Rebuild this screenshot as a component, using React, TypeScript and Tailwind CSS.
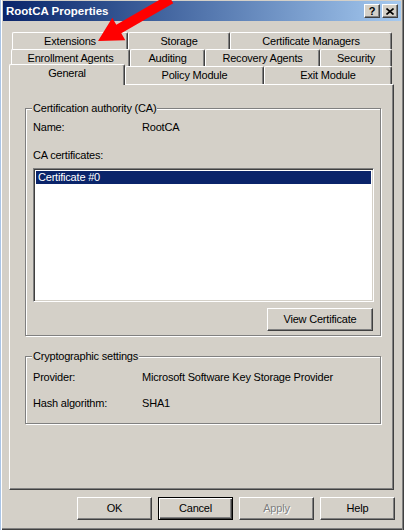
import React from 'react';

const tabBase =
  'flex items-center justify-center bg-[#d4d0c8] border-l border-t border-white border-r border-r-[#404040] shadow-[inset_-1px_0_0_#808080] rounded-t-[2px]';

const btnBase =
  'flex items-center justify-center h-[23px] bg-[#d4d0c8] border border-t-white border-l-white border-r-[#404040] border-b-[#404040] shadow-[inset_-1px_-1px_0_#808080]';

const Tab = ({ label, w, selected }: { label: string; w: string; selected?: boolean }) => (
  <div
    className={`${tabBase} ${w} ${
      selected ? 'h-[21px] -mb-px relative z-10 pb-[3px]' : 'h-full'
    }`}
  >
    {label}
  </div>
);

const GroupBox = ({ title, className, children }: { title: string; className: string; children: React.ReactNode }) => (
  <div
    className={`relative border border-[#808080] shadow-[inset_1px_1px_0_#fff,1px_1px_0_#fff] ${className}`}
  >
    <span className="absolute -top-[7px] left-[6px] bg-[#d4d0c8] px-px leading-[13px]">{title}</span>
    {children}
  </div>
);

const App: React.FC = () => {
  return (
    <div className="relative w-[404px] h-[530px] overflow-hidden bg-[#d4d0c8] text-black text-[11px] leading-[13px] tracking-[-0.2px] font-['Liberation_Sans',Arial,sans-serif] shadow-[inset_1px_0_0_#a9c4e6,inset_2px_0_0_#ffffff,inset_-1px_0_0_#404040,inset_-2px_0_0_#808080,inset_0_-1px_0_#404040,inset_0_-2px_0_#808080]">
      {/* Title bar */}
      <div className="mx-[3px] mt-px h-[20px] flex items-center justify-between bg-gradient-to-r from-[#0a246a] to-[#a6caf0] pl-[3px] pr-[3px]">
        <span className="text-white font-bold text-[11.5px] tracking-normal">RootCA Properties</span>
        <div className="flex gap-[2px]">
          <div className={`${btnBase} w-[16px] !h-[14px] font-bold text-[11px] leading-none tracking-normal`}>?</div>
          <div className={`${btnBase} w-[16px] !h-[14px]`}>
            <svg width="8" height="7" viewBox="0 0 8 7">
              <path d="M0.5 0.5 L7.5 6.5 M7.5 0.5 L0.5 6.5" stroke="#000" strokeWidth="1.6" />
            </svg>
          </div>
        </div>
      </div>

      {/* Tabs */}
      <div className="mt-[11px] flex flex-col">
        <div className="ml-[12px] h-[17px] flex">
          <Tab label="Extensions" w="w-[116px]" />
          <Tab label="Storage" w="w-[102px]" />
          <Tab label="Certificate Managers" w="w-[162px]" />
        </div>
        <div className="ml-[11px] h-[17px] flex">
          <Tab label="Enrollment Agents" w="w-[119px]" />
          <Tab label="Auditing" w="w-[75px]" />
          <Tab label="Recovery Agents" w="w-[115px]" />
          <Tab label="Security" w="w-[72px]" />
        </div>
        <div className="ml-[9px] h-[18px] flex items-end">
          <Tab label="General" w="w-[116px]" selected />
          <Tab label="Policy Module" w="w-[139px]" />
          <Tab label="Exit Module" w="w-[128px]" />
        </div>

        {/* Tab page */}
        <div className="ml-[9px] w-[385px] h-[406px] border-t border-l border-white border-r border-b border-r-[#404040] border-b-[#404040] shadow-[inset_-1px_-1px_0_#808080] pt-[23px] pl-[15px]">
          <GroupBox title="Certification authority (CA)" className="w-[356px] h-[228px] pt-[12px] pl-[7px]">
            <div className="flex">
              <span className="w-[109px]">Name:</span>
              <span>RootCA</span>
            </div>
            <div className="mt-[15px]">CA certificates:</div>
            <div className="mt-[6px] w-[341px] h-[134px] bg-white border border-t-[#808080] border-l-[#808080] border-b-white border-r-white shadow-[inset_1px_1px_0_#404040,inset_-1px_-1px_0_#d4d0c8] p-[2px]">
              <div className="h-[13px] bg-[#0a246a] text-white pl-[2px]">Certificate #0</div>
            </div>
            <div className="mt-[6px] w-[340px] flex justify-end">
              <div className={`${btnBase} w-[106px]`}>View Certificate</div>
            </div>
          </GroupBox>

          <GroupBox title="Cryptographic settings" className="mt-[20px] w-[356px] h-[68px] pt-[14px] pl-[7px]">
            <div className="flex">
              <span className="w-[109px]">Provider:</span>
              <span>Microsoft Software Key Storage Provider</span>
            </div>
            <div className="flex mt-[13px]">
              <span className="w-[109px]">Hash algorithm:</span>
              <span>SHA1</span>
            </div>
          </GroupBox>
        </div>

        {/* Dialog buttons */}
        <div className="mt-[7px] ml-[77px] flex gap-[6px]">
          <div className={`${btnBase} w-[75px]`}>OK</div>
          <div className="flex items-center justify-center w-[75px] h-[23px] bg-[#d4d0c8] border border-black shadow-[inset_1px_1px_0_#fff,inset_-1px_-1px_0_#404040,inset_-2px_-2px_0_#808080]">
            Cancel
          </div>
          <div className={`${btnBase} w-[75px] text-[#808080] [text-shadow:1px_1px_0_#fff]`}>Apply</div>
          <div className={`${btnBase} w-[75px]`}>Help</div>
        </div>
      </div>

      {/* Red annotation arrow */}
      <svg className="absolute left-0 top-0 pointer-events-none" width="404" height="60" viewBox="0 0 404 60">
        <polygon
          points="173.3,3.3 121.3,33.3 125.3,40.3 98,41 112.3,17.7 116.3,24.7 168.3,-5.3"
          fill="#ff0000"
        />
      </svg>
    </div>
  );
};

export default App;
